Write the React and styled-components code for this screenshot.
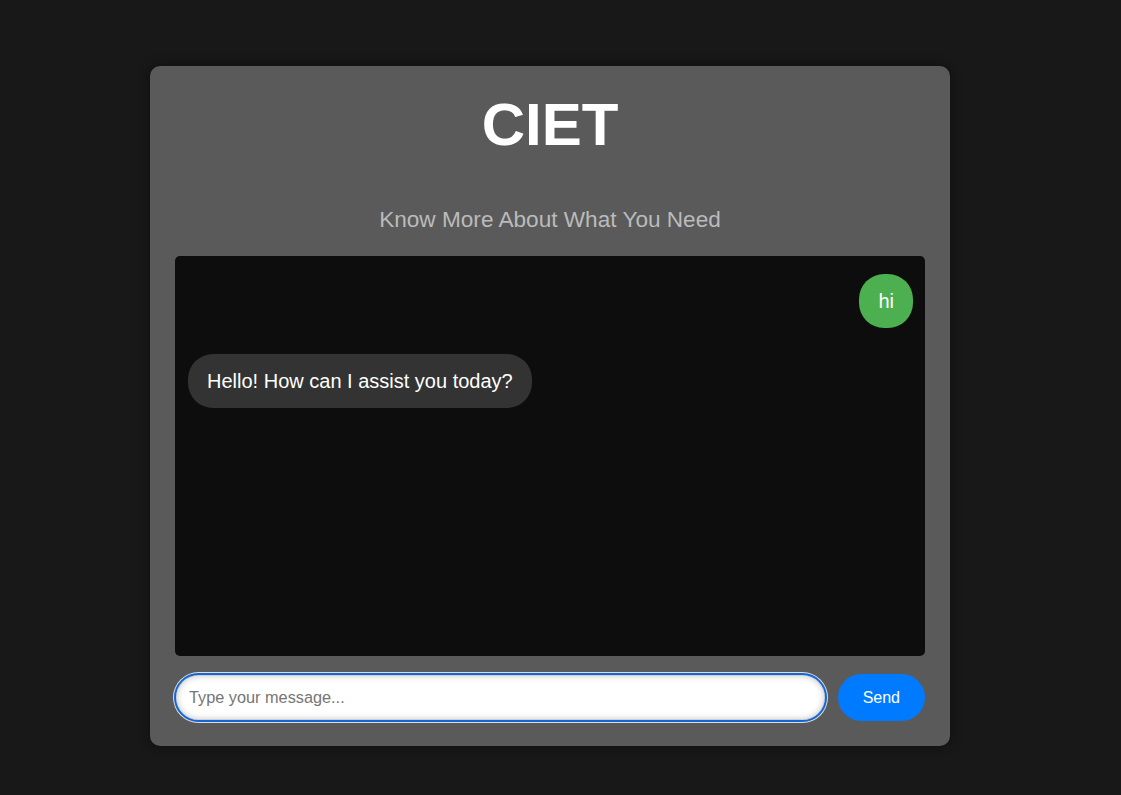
import React from "react";
import styled, { createGlobalStyle } from "styled-components";

const GlobalStyle = createGlobalStyle`
  * { box-sizing: border-box; }
  html, body { margin: 0; padding: 0; background: #181818; }
  body { font-family: "Liberation Sans", Arial, sans-serif; }
`;

const Page = styled.div`
  min-height: 100vh;
  display: flex;
  justify-content: center;
  align-items: flex-start;
  padding: 66px 21px 49px 0;
`;

const Card = styled.div`
  width: 800px;
  background: #5a5a5a;
  border-radius: 10px;
  padding: 25px;
  box-shadow: 0 0 12px rgba(0, 0, 0, 0.45);
  display: flex;
  flex-direction: column;
`;

const Title = styled.h1`
  margin: 0 0 49px;
  font-size: 60px;
  line-height: 67px;
  font-weight: 700;
  color: #ffffff;
  text-align: center;
`;

const Subtitle = styled.p`
  margin: 0 0 24px;
  font-size: 22.6px;
  line-height: 25px;
  color: #bbbbbb;
  text-align: center;
`;

const ChatBox = styled.div`
  height: 400px;
  background: #0d0d0d;
  border-radius: 5px;
  padding: 18px 12px 18px 13px;
  display: flex;
  flex-direction: column;
  gap: 26px;
  overflow-y: auto;
`;

const Bubble = styled.div`
  align-self: ${(p) => (p.$user ? "flex-end" : "flex-start")};
  background: ${(p) => (p.$user ? "#4caf50" : "#333333")};
  color: #ffffff;
  font-size: 20px;
  line-height: 22px;
  padding: 16px 19px 16px 19px;
  border-radius: 25px;
  max-width: 70%;
`;

const InputRow = styled.div`
  margin-top: 18px;
  display: flex;
  align-items: center;
  gap: 13px;
`;

const MessageInput = styled.input`
  flex: 1;
  height: 45px;
  margin-left: 1px;
  border: 1px solid #cfcfcf;
  border-radius: 25px;
  padding: 0 12px;
  font-family: "Liberation Sans", Arial, sans-serif;
  font-size: 16.3px;
  color: #222;
  background: #ffffff;
  outline: 2px solid #1366d6;
  box-shadow: 0 0 0 3px rgba(235, 235, 235, 0.9), inset 0 0 6px rgba(0, 0, 0, 0.22);
  &::placeholder { color: #757575; }
`;

const SendButton = styled.button`
  height: 47px;
  padding: 0 25px;
  border: none;
  border-radius: 24px;
  background: #007bff;
  color: #ffffff;
  font-family: "Liberation Sans", Arial, sans-serif;
  font-size: 16px;
  cursor: pointer;
`;

export default function App() {
  return (
    <>
      <GlobalStyle />
      <Page>
        <Card>
          <Title>CIET</Title>
          <Subtitle>Know More About What You Need</Subtitle>
          <ChatBox>
            <Bubble $user>hi</Bubble>
            <Bubble>Hello! How can I assist you today?</Bubble>
          </ChatBox>
          <InputRow>
            <MessageInput placeholder="Type your message..." />
            <SendButton>Send</SendButton>
          </InputRow>
        </Card>
      </Page>
    </>
  );
}
